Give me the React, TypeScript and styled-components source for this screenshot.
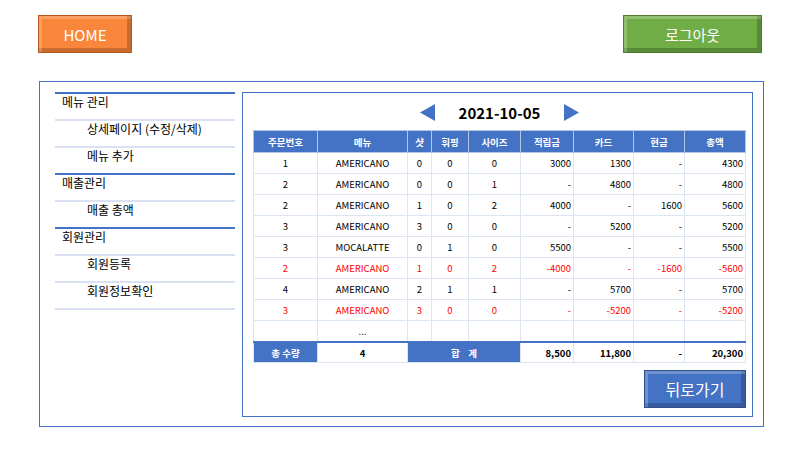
import styled, { createGlobalStyle } from "styled-components";

const GlobalStyle = createGlobalStyle`
  body {
    margin: 0;
    background: #ffffff;
    font-family: "Noto Sans CJK KR", "Noto Sans", sans-serif;
  }
`;

const Page = styled.div`
  width: 800px;
  height: 450px;
  display: flex;
  flex-direction: column;
  box-sizing: border-box;
  padding: 15px 38px 0 38px;
`;

const TopBar = styled.div`
  display: flex;
  justify-content: space-between;
  height: 38px;
`;

const BevelButton = styled.button<{ $bg: string; $edge: string; $w: number }>`
  width: ${(p) => p.$w}px;
  height: 38px;
  box-sizing: border-box;
  border: 1px solid ${(p) => p.$edge};
  background: ${(p) => p.$bg};
  color: #ffffff;
  font-family: "Noto Sans CJK KR", "Noto Sans", sans-serif;
  font-size: 15px;
  padding: 0;
  box-shadow: inset 3px 3px 0 rgba(255, 255, 255, 0.22),
    inset -4px -4px 0 rgba(0, 0, 0, 0.2);
  cursor: pointer;
`;

const Panel = styled.div`
  margin: 28px 0 0 1px;
  width: 725px;
  height: 346px;
  box-sizing: border-box;
  border: 1px solid #4472c4;
  display: flex;
  gap: 7px;
  padding: 10px 10px 9px 15px;
`;

const Sidebar = styled.nav`
  width: 180px;
  display: flex;
  flex-direction: column;
`;

const MenuItem = styled.div<{ $top?: boolean }>`
  height: 27px;
  box-sizing: border-box;
  border-top: 2px solid ${(p) => (p.$top ? "#4472c4" : "#d9e1f2")};
  padding: 0 0 0 ${(p) => (p.$top ? 7 : 32)}px;
  font-size: 12px;
  line-height: 16px;
  color: #000000;
`;

const EndLine = styled.div`
  border-top: 2px solid #d9e1f2;
`;

const Content = styled.div`
  flex: 1;
  box-sizing: border-box;
  border: 1px solid #4472c4;
  padding: 0 6px 0 10px;
  display: flex;
  flex-direction: column;
`;

const DateRow = styled.div`
  height: 35px;
  display: flex;
  align-items: center;
  justify-content: center;
  gap: 24px;
  padding-top: 2px;
`;

const DateText = styled.div`
  font-size: 15px;
  font-weight: 700;
  color: #000000;
`;

const Table = styled.table`
  width: 492px;
  border-collapse: collapse;
  table-layout: fixed;
  font-size: 9.5px;
`;

const Th = styled.th`
  height: 21px;
  padding: 0;
  background: #4472c4;
  color: #ffffff;
  font-weight: 700;
  border: 1px solid #b4c6e7;
  text-align: center;
`;

const Td = styled.td<{ $num?: boolean; $red?: boolean }>`
  height: 20px;
  padding: 0 ${(p) => (p.$num ? 2 : 0)}px 0 0;
  border: 1px solid #dce6f2;
  text-align: ${(p) => (p.$num ? "right" : "center")};
  color: ${(p) => (p.$red ? "#ff0000" : "#000000")};
  white-space: nowrap;
`;

const TotalTd = styled.td<{ $blue?: boolean; $num?: boolean }>`
  height: 19px;
  padding: 0 ${(p) => (p.$num ? 2 : 0)}px 0 0;
  border: 1px solid #dce6f2;
  border-top: 2px solid #4472c4;
  background: ${(p) => (p.$blue ? "#4472c4" : "#ffffff")};
  color: ${(p) => (p.$blue ? "#ffffff" : "#000000")};
  font-weight: 700;
  text-align: ${(p) => (p.$num ? "right" : "center")};
  white-space: pre;
`;

const Footer = styled.div`
  display: flex;
  justify-content: flex-end;
  padding-top: 7px;
`;

const BackButton = styled(BevelButton)`
  font-size: 16px;
`;

const Arrow = ({ dir }: { dir: "left" | "right" }) => (
  <svg width="15" height="17" viewBox="0 0 15 17">
    {dir === "left" ? (
      <polygon points="15,0 15,17 0,8.5" fill="#4472c4" />
    ) : (
      <polygon points="0,0 0,17 15,8.5" fill="#4472c4" />
    )}
  </svg>
);

type Row = {
  no: string;
  menu: string;
  shot: string;
  whip: string;
  size: string;
  point: string;
  card: string;
  cash: string;
  total: string;
  red?: boolean;
};

const rows: Row[] = [
  { no: "1", menu: "AMERICANO", shot: "0", whip: "0", size: "0", point: "3000", card: "1300", cash: "-", total: "4300" },
  { no: "2", menu: "AMERICANO", shot: "0", whip: "0", size: "1", point: "-", card: "4800", cash: "-", total: "4800" },
  { no: "2", menu: "AMERICANO", shot: "1", whip: "0", size: "2", point: "4000", card: "-", cash: "1600", total: "5600" },
  { no: "3", menu: "AMERICANO", shot: "3", whip: "0", size: "0", point: "-", card: "5200", cash: "-", total: "5200" },
  { no: "3", menu: "MOCALATTE", shot: "0", whip: "1", size: "0", point: "5500", card: "-", cash: "-", total: "5500" },
  { no: "2", menu: "AMERICANO", shot: "1", whip: "0", size: "2", point: "-4000", card: "-", cash: "-1600", total: "-5600", red: true },
  { no: "4", menu: "AMERICANO", shot: "2", whip: "1", size: "1", point: "-", card: "5700", cash: "-", total: "5700" },
  { no: "3", menu: "AMERICANO", shot: "3", whip: "0", size: "0", point: "-", card: "-5200", cash: "-", total: "-5200", red: true },
  { no: "", menu: "...", shot: "", whip: "", size: "", point: "", card: "", cash: "", total: "" },
];

const widths = [64, 90, 24, 37, 52, 53, 60, 51, 61];
const headers = ["주문번호", "메뉴", "샷", "휘핑", "사이즈", "적립금", "카드", "현금", "총액"];

export default function App() {
  return (
    <>
      <GlobalStyle />
      <Page>
        <TopBar>
          <BevelButton $bg="#f9863a" $edge="#b8561a" $w={94}>
            HOME
          </BevelButton>
          <BevelButton $bg="#70ad47" $edge="#4e7a31" $w={139}>
            로그아웃
          </BevelButton>
        </TopBar>
        <Panel>
          <Sidebar>
            <MenuItem $top>메뉴 관리</MenuItem>
            <MenuItem>상세페이지 (수정/삭제)</MenuItem>
            <MenuItem>메뉴 추가</MenuItem>
            <MenuItem $top>매출관리</MenuItem>
            <MenuItem>매출 총액</MenuItem>
            <MenuItem $top>회원관리</MenuItem>
            <MenuItem>회원등록</MenuItem>
            <MenuItem>회원정보확인</MenuItem>
            <EndLine />
          </Sidebar>
          <Content>
            <DateRow>
              <Arrow dir="left" />
              <DateText>2021-10-05</DateText>
              <Arrow dir="right" />
            </DateRow>
            <Table>
              <colgroup>
                {widths.map((w, i) => (
                  <col key={i} style={{ width: w }} />
                ))}
              </colgroup>
              <thead>
                <tr>
                  {headers.map((h) => (
                    <Th key={h}>{h}</Th>
                  ))}
                </tr>
              </thead>
              <tbody>
                {rows.map((r, i) => (
                  <tr key={i}>
                    <Td $red={r.red}>{r.no}</Td>
                    <Td $red={r.red}>{r.menu}</Td>
                    <Td $red={r.red}>{r.shot}</Td>
                    <Td $red={r.red}>{r.whip}</Td>
                    <Td $red={r.red}>{r.size}</Td>
                    <Td $red={r.red} $num>{r.point}</Td>
                    <Td $red={r.red} $num>{r.card}</Td>
                    <Td $red={r.red} $num>{r.cash}</Td>
                    <Td $red={r.red} $num>{r.total}</Td>
                  </tr>
                ))}
                <tr>
                  <TotalTd $blue>총 수량</TotalTd>
                  <TotalTd>4</TotalTd>
                  <TotalTd $blue colSpan={3}>
                    {"합    계"}
                  </TotalTd>
                  <TotalTd $num>8,500</TotalTd>
                  <TotalTd $num>11,800</TotalTd>
                  <TotalTd $num>-</TotalTd>
                  <TotalTd $num>20,300</TotalTd>
                </tr>
              </tbody>
            </Table>
            <Footer>
              <BackButton $bg="#4472c4" $edge="#2f4f8a" $w={102}>
                뒤로가기
              </BackButton>
            </Footer>
          </Content>
        </Panel>
      </Page>
    </>
  );
}
